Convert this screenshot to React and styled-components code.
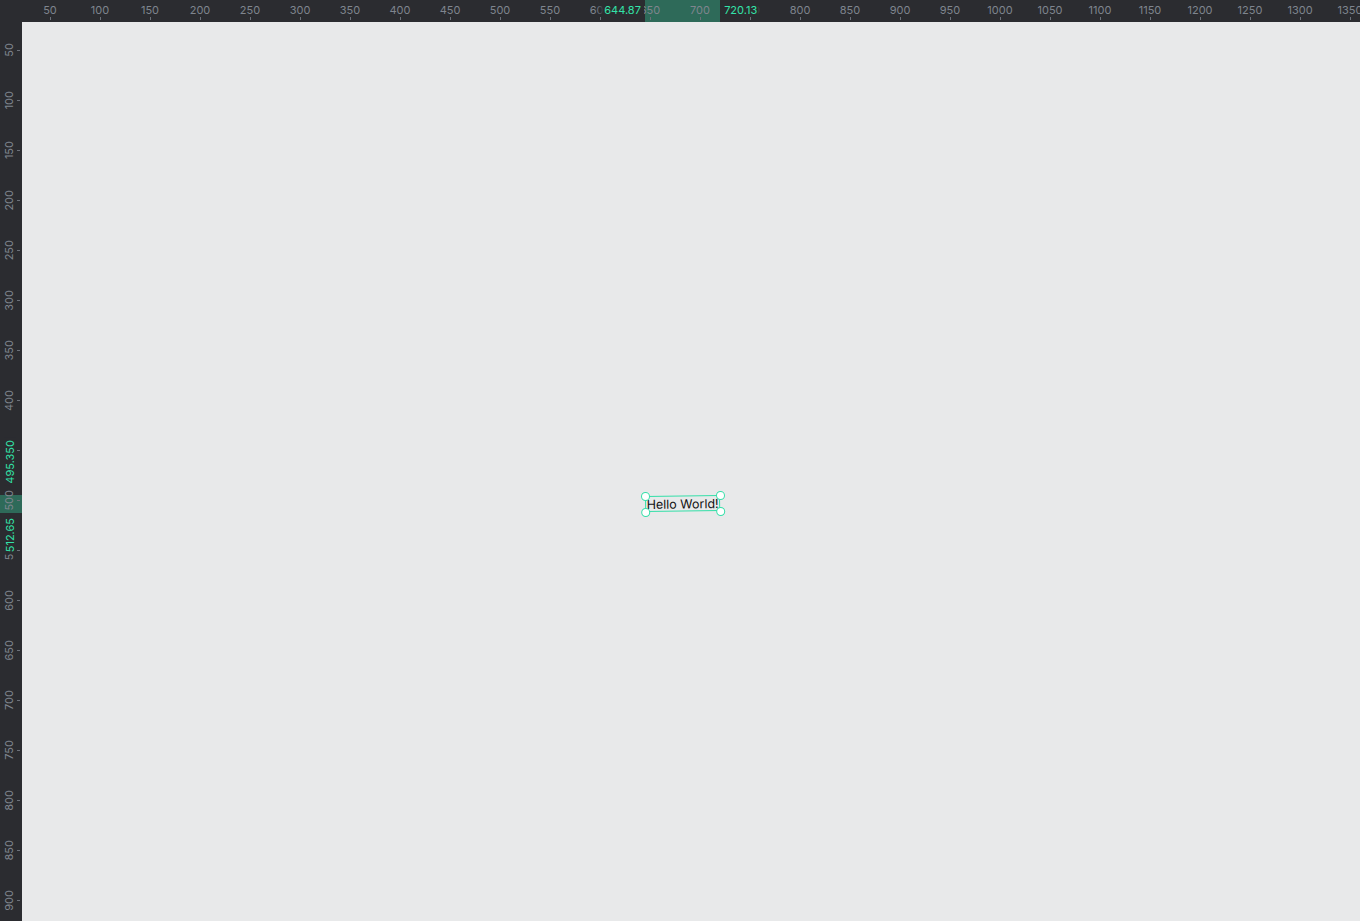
import React from "react";
import styled, { createGlobalStyle } from "styled-components";

const RULER = 22;
const SEL = { x1: 644.87, x2: 720.13, y1: 495.35, y2: 512.65 };
const STEP = 50;
const VIEW_H = 921;

const GlobalStyle = createGlobalStyle`
  html, body { margin: 0; padding: 0; height: 100%; overflow: hidden; }
  body { background: #e8e9ea; font-family: Inter, "Noto Sans", sans-serif; }
  #root { height: 100%; }
`;

const Screen = styled.div`
  display: grid;
  grid-template-columns: ${RULER}px 1fr;
  grid-template-rows: ${RULER}px 1fr;
  width: 1360px;
  height: ${VIEW_H}px;
  background: #2b2c30;
`;

const Ruler = styled.div`
  position: relative;
  display: flex;
  background: #2b2c30;
  overflow: hidden;
  ${(p) =>
    p.$vertical
      ? `flex-direction: column; grid-row: 1 / 3; grid-column: 1; padding-top: ${STEP / 2}px;`
      : `flex-direction: row; grid-row: 1; grid-column: 1 / 3; padding-left: ${STEP / 2}px;`}
`;

const Cell = styled.div`
  position: relative;
  z-index: 1;
  flex: 0 0 ${STEP}px;
  display: flex;
  align-items: center;
  box-sizing: border-box;
  ${(p) =>
    p.$vertical
      ? "flex-direction: row; width: 100%; justify-content: flex-end; gap: 2px; padding-right: 2px;"
      : "flex-direction: column; height: 100%; justify-content: flex-end; gap: 1px; padding-bottom: 2px;"}
`;

const Label = styled.span`
  font-size: 11px;
  line-height: 12px;
  color: #7f858e;
  white-space: nowrap;
  ${(p) => (p.$vertical ? "writing-mode: vertical-rl; transform: rotate(180deg);" : "")}
`;

const Tick = styled.span`
  background: #6c717a;
  ${(p) => (p.$vertical ? "width: 3px; height: 1px;" : "width: 1px; height: 3px;")}
`;

const Band = styled.div`
  position: absolute;
  z-index: 0;
  background: #2e6a59;
  ${(p) => (p.$vertical ? "left: 0; right: 0;" : "top: 0; bottom: 0;")}
`;

const Coord = styled.span`
  position: absolute;
  z-index: 2;
  font-size: 11px;
  line-height: 12px;
  color: #33e3a9;
  white-space: nowrap;
  ${(p) =>
    p.$vertical
      ? `left: 4px; writing-mode: vertical-rl; transform: rotate(180deg);
         background: #2b2c30; padding: 2px 0;`
      : `top: 4px;
         background: linear-gradient(${p.$start ? "to right" : "to left"}, rgba(43,44,48,0), #2b2c30 8px);
         ${p.$start ? "padding: 0 3px 0 8px;" : "padding: 0 8px 0 3px;"}`}
`;

const Canvas = styled.div`
  position: relative;
  grid-row: 2;
  grid-column: 2;
  background: #e8e9ea;
  overflow: hidden;
`;

const TextNode = styled.div`
  position: absolute;
  box-sizing: border-box;
  display: flex;
  align-items: center;
  justify-content: center;
  border: 1.5px solid #34dfa8;
  font-family: Inter, "Noto Sans", sans-serif;
  font-size: 12.5px;
  color: #111;
  transform: rotate(-0.76deg);
  transform-origin: left top;
`;

const Handle = styled.span`
  position: absolute;
  width: 7px;
  height: 7px;
  border-radius: 50%;
  background: #fff;
  border: 1.5px solid #34dfa8;
  ${(p) => (p.$top ? "top: -5.5px;" : "bottom: -5.5px;")}
  ${(p) => (p.$left ? "left: -5.5px;" : "right: -5.5px;")}
`;

const marks = (n) => Array.from({ length: n }, (_, i) => (i + 1) * STEP);

const Marks = ({ values, vertical }) =>
  values.map((v) => (
    <Cell key={v} $vertical={vertical}>
      <Label $vertical={vertical}>{v}</Label>
      <Tick $vertical={vertical} />
    </Cell>
  ));

export default function App() {
  return (
    <>
      <GlobalStyle />
      <Screen>
        <Ruler>
          <Band style={{ left: SEL.x1, width: SEL.x2 - SEL.x1 }} />
          <Marks values={marks(27)} />
          <Coord $start style={{ right: 1360 - SEL.x1 + 1 }}>{SEL.x1}</Coord>
          <Coord style={{ left: SEL.x2 + 1 }}>{SEL.x2}</Coord>
        </Ruler>
        <Ruler $vertical>
          <Band $vertical style={{ top: SEL.y1, height: SEL.y2 - SEL.y1 }} />
          <Marks vertical values={marks(18)} />
          <Coord $vertical style={{ bottom: VIEW_H - SEL.y1 + 10 }}>
            {"495.350"}
          </Coord>
          <Coord $vertical style={{ top: SEL.y2 + 3 }}>
            {"512.65"}
          </Coord>
        </Ruler>
        <Canvas>
          <TextNode style={{ left: 645 - RULER, top: 496 - RULER, width: 75, height: 16 }}>
            Hello World!
            <Handle $top $left />
            <Handle $top />
            <Handle $left />
            <Handle />
          </TextNode>
        </Canvas>
      </Screen>
    </>
  );
}
